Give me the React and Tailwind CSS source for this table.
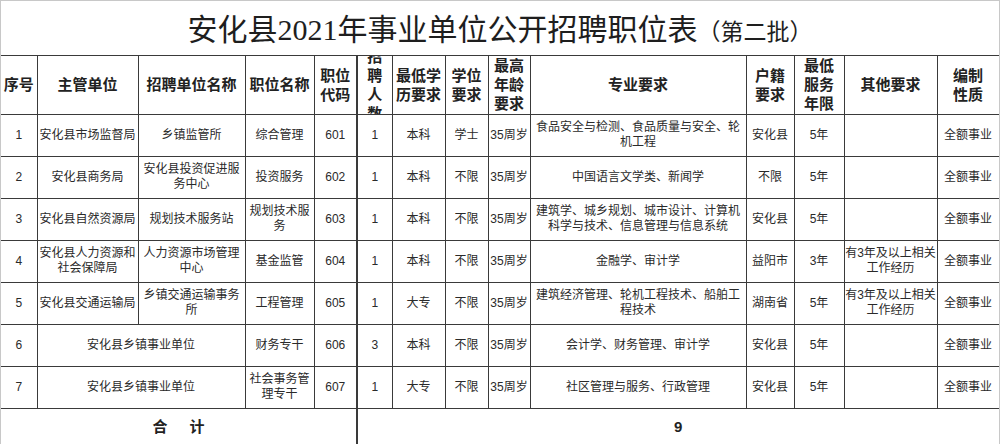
const widths = [36, 101, 107, 69, 43, 35, 53, 43, 42, 216, 48, 50, 93, 62]

const headers = [
  '序号',
  '主管单位',
  '招聘单位名称',
  '职位名称',
  '职位\n代码',
  '招\n聘\n人\n数',
  '最低学\n历要求',
  '学位\n要求',
  '最高\n年龄\n要求',
  '专业要求',
  '户籍\n要求',
  '最低\n服务\n年限',
  '其他要求',
  '编制\n性质',
]

const rows = [
  ['1', '安化县市场监督局', '乡镇监管所', '综合管理', '601', '1', '本科', '学士', '35周岁', '食品安全与检测、食品质量与安全、轮\n机工程', '安化县', '5年', '', '全额事业'],
  ['2', '安化县商务局', '安化县投资促进服\n务中心', '投资服务', '602', '1', '本科', '不限', '35周岁', '中国语言文学类、新闻学', '不限', '5年', '', '全额事业'],
  ['3', '安化县自然资源局', '规划技术服务站', '规划技术服\n务', '603', '1', '本科', '不限', '35周岁', '建筑学、城乡规划、城市设计、计算机\n科学与技术、信息管理与信息系统', '安化县', '5年', '', '全额事业'],
  ['4', '安化县人力资源和\n社会保障局', '人力资源市场管理\n中心', '基金监管', '604', '1', '本科', '不限', '35周岁', '金融学、审计学', '益阳市', '3年', '有3年及以上相关\n工作经历', '全额事业'],
  ['5', '安化县交通运输局', '乡镇交通运输事务\n所', '工程管理', '605', '1', '大专', '不限', '35周岁', '建筑经济管理、轮机工程技术、船舶工\n程技术', '湖南省', '5年', '有3年及以上相关\n工作经历', '全额事业'],
  ['6', '安化县乡镇事业单位', null, '财务专干', '606', '3', '本科', '不限', '35周岁', '会计学、财务管理、审计学', '安化县', '5年', '', '全额事业'],
  ['7', '安化县乡镇事业单位', null, '社会事务管\n理专干', '607', '1', '大专', '不限', '35周岁', '社区管理与服务、行政管理', '安化县', '5年', '', '全额事业'],
]

const sans = { fontFamily: '"Liberation Sans", "Noto Sans CJK SC", sans-serif' }

export default function App() {
  return (
    <div className="w-[1000px] h-[444px] overflow-hidden bg-white border-t border-l border-r border-[#c8c8c8] text-[#2a2a2a]">
      <table className="table-fixed border-collapse w-[998px]" style={sans}>
        <colgroup>
          {widths.map((w, i) => (
            <col key={i} style={{ width: w }} />
          ))}
        </colgroup>
        <tbody>
          <tr className="h-[54px]">
            <td colSpan={14} className="border-b border-[#3a3a3a] text-center align-middle pt-1">
              <span className="text-[30px] text-[#1e1e1e] font-['Liberation_Serif','Noto_Sans_CJK_SC',serif]">
                安化县2021年事业单位公开招聘职位表
              </span>
              <span className="text-[23px] text-[#1e1e1e] font-['Liberation_Serif','Noto_Sans_CJK_SC',serif]">
                （第二批）
              </span>
            </td>
          </tr>
          <tr className="h-[59px]">
            {headers.map((h, i) => (
              <td
                key={i}
                className={`border border-[#3a3a3a] p-0 text-center align-middle ${i === 0 ? 'border-l-0' : ''} ${i === 5 ? 'border-l-2' : ''}`}
              >
                <div className="max-h-[58px] overflow-hidden flex flex-col justify-center">
                  <span className="whitespace-pre-line text-[15px] leading-[19px] font-bold text-[#222]">
                    {h}
                  </span>
                </div>
              </td>
            ))}
          </tr>
          {rows.map((r, ri) => (
            <tr key={ri} className="h-[42px]">
              {r.map((c, ci) => {
                if (c === null) return null
                const span = r[ci + 1] === null ? 2 : 1
                return (
                  <td
                    key={ci}
                    colSpan={span}
                    className={`border border-[#3a3a3a] px-0 text-center align-middle whitespace-pre-line text-[12px] leading-[15px] text-[#2a2a2a] ${ci === 0 ? 'border-l-0' : ''} ${ci === 5 ? 'border-l-2' : ''}`}
                  >
                    {c}
                  </td>
                )
              })}
            </tr>
          ))}
          <tr className="h-[37px]">
            <td colSpan={5} className="border border-l-0 border-[#3a3a3a] text-center align-middle">
              <span className="text-[15px] font-bold tracking-[22px] text-[#222] pl-[22px]">合计</span>
            </td>
            <td colSpan={9} className="border border-l-2 border-[#3a3a3a] text-center align-middle">
              <span className="text-[15px] font-bold text-[#222]">9</span>
            </td>
          </tr>
        </tbody>
      </table>
    </div>
  )
}
